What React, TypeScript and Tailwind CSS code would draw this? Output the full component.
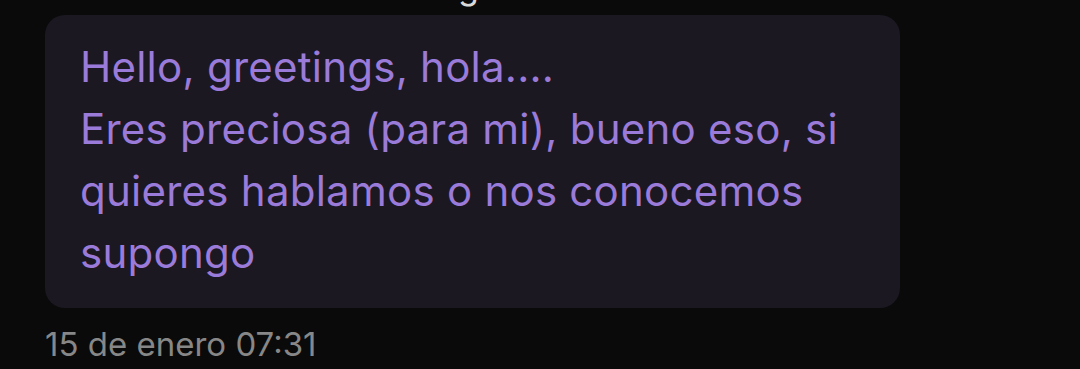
export default function App() {
  return (
    <div className="w-[1080px] h-[369px] overflow-hidden bg-[#0a0a0a] font-['Inter','Noto_Sans',sans-serif]">
      {/* bottom of the previous line, cut by the top edge */}
      <div className="h-0 relative">
        <span className="absolute left-[458px] -top-[30px] text-[34px] leading-[34px] text-[#d9d9d9]">g</span>
      </div>
      <div className="pt-[15px] pl-[45px]">
        <div className="w-[855px] h-[293px] rounded-[20px] bg-[#1b1822] pl-[35px] pt-[21px] text-[42px] leading-[62px] tracking-[0.25px] text-[#9b7bd9]">
          <div>Hello, greetings, hola....</div>
          <div>Eres preciosa (para mi), bueno eso, si</div>
          <div>quieres hablamos o nos conocemos</div>
          <div>supongo</div>
        </div>
        <div className="mt-[16px] text-[33px] leading-[40px] text-[#878787]">15 de enero 07:31</div>
      </div>
    </div>
  );
}
